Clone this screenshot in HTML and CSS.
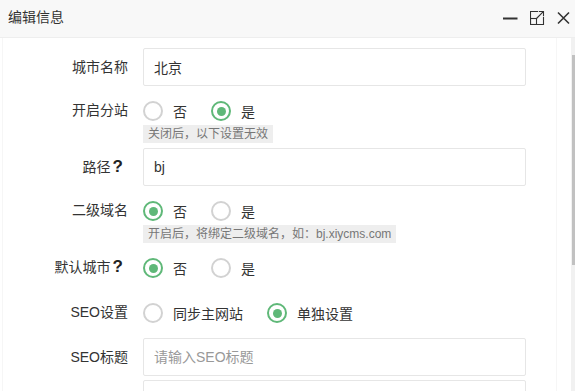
FILE: index.html
```html
<!DOCTYPE html>
<html lang="zh-CN">
<head>
    <meta charset="UTF-8">
    <meta name="viewport" content="width=device-width, initial-scale=1.0">
    <title>编辑信息</title>
    <link rel="stylesheet" href="styles.css">
</head>
<body>
    <div class="dialog">
        <!-- 标题栏 -->
        <div class="title-bar">
            <span class="title">编辑信息</span>
            <div class="title-tools">
                <svg class="tool" width="15" height="14" viewBox="0 0 15 14">
                    <path d="M0 7.5H14.5" stroke="#333" stroke-width="2" fill="none"/>
                </svg>
                <svg class="tool" width="15" height="14" viewBox="0 0 15 14">
                    <path d="M8 0.5H0.5V13.5H13.5V6" stroke="#333" stroke-width="1.1" fill="none"/>
                    <rect x="0.5" y="7.5" width="6" height="6" stroke="#333" stroke-width="1.1" fill="none"/>
                    <path d="M6.5 7.5L13.3 0.7M8.8 0.5H13.5V5.2" stroke="#333" stroke-width="1.1" fill="none"/>
                </svg>
                <svg class="tool" width="13" height="14" viewBox="0 0 13 14">
                    <path d="M1 1.5L12 12.5M12 1.5L1 12.5" stroke="#333" stroke-width="1.6" fill="none"/>
                </svg>
            </div>
        </div>

        <div class="dialog-body">
            <div class="content">
                <form class="form">
                    <div class="form-item">
                        <label class="form-label">城市名称</label>
                        <div class="field">
                            <input class="input" type="text" value="北京">
                        </div>
                    </div>

                    <div class="form-item">
                        <label class="form-label">开启分站</label>
                        <div class="field">
                            <div class="radios">
                                <span class="radio"><i class="dot"></i>否</span>
                                <span class="radio checked"><i class="dot"></i>是</span>
                            </div>
                            <span class="hint">关闭后，以下设置无效</span>
                        </div>
                    </div>

                    <div class="form-item">
                        <label class="form-label">路径<b class="help">?</b></label>
                        <div class="field">
                            <input class="input" type="text" value="bj">
                        </div>
                    </div>

                    <div class="form-item">
                        <label class="form-label">二级域名</label>
                        <div class="field">
                            <div class="radios">
                                <span class="radio checked"><i class="dot"></i>否</span>
                                <span class="radio"><i class="dot"></i>是</span>
                            </div>
                            <span class="hint">开启后，将绑定二级域名，如：bj.xiycms.com</span>
                        </div>
                    </div>

                    <div class="form-item">
                        <label class="form-label">默认城市<b class="help">?</b></label>
                        <div class="field">
                            <div class="radios">
                                <span class="radio checked"><i class="dot"></i>否</span>
                                <span class="radio"><i class="dot"></i>是</span>
                            </div>
                        </div>
                    </div>

                    <div class="form-item">
                        <label class="form-label">SEO设置</label>
                        <div class="field">
                            <div class="radios">
                                <span class="radio"><i class="dot"></i>同步主网站</span>
                                <span class="radio checked"><i class="dot"></i>单独设置</span>
                            </div>
                        </div>
                    </div>

                    <div class="form-item">
                        <label class="form-label">SEO标题</label>
                        <div class="field">
                            <input class="input" type="text" placeholder="请输入SEO标题">
                        </div>
                    </div>

                    <div class="form-item tight">
                        <label class="form-label"></label>
                        <div class="field">
                            <input class="input" type="text">
                        </div>
                    </div>
                </form>
            </div>
            <div class="scrollbar"><div class="thumb"></div></div>
        </div>
    </div>
</body>
</html>
```

FILE: styles.css
```css
/* 页面基础 */
html, body {
    margin: 0;
    padding: 0;
    height: 100%;
    overflow: hidden;
}

body {
    font-family: "Liberation Sans", "Noto Sans CJK SC", sans-serif;
    font-size: 14px;
    color: #333;
    background-color: #fff;
}

.dialog {
    display: flex;
    flex-direction: column;
    height: 391px;
}

/* 标题栏 */
.title-bar {
    height: 37px;
    flex-shrink: 0;
    display: flex;
    align-items: center;
    justify-content: space-between;
    padding: 0 5px 0 8px;
    background-color: #f8f8f8;
    border-bottom: 1px solid #eee;
}

.title {
    font-size: 14px;
    color: #333;
    margin-top: -5px;
}

.title-tools {
    display: flex;
    align-items: center;
    gap: 12px;
    margin-top: -2px;
}

.tool {
    display: block;
}

/* 内容区 */
.dialog-body {
    flex: 1;
    display: flex;
    min-height: 0;
}

.content {
    width: 555px;
    margin-left: 2px;
    border-left: 1px solid #f6f6f6;
    border-right: 1px solid #f6f6f6;
    padding: 10px 30px 0 0;
    box-sizing: border-box;
    overflow: hidden;
}

.scrollbar {
    width: 4px;
    margin-left: 14px;
    background-color: #f1f1f1;
    padding-top: 17px;
    box-sizing: border-box;
}

.thumb {
    height: 210px;
    margin-left: 1px;
    background-color: #c1c1c1;
}

/* 表单 */
.form-item {
    display: grid;
    grid-template-columns: 125px 1fr;
    column-gap: 15px;
    margin-bottom: 5px;
}

.form-item.tight {
    margin-bottom: 0;
    margin-top: -1px;
}

.form-label {
    text-align: right;
    line-height: 38px;
    white-space: nowrap;
}

.help {
    font-size: 17px;
    font-weight: bold;
    color: #222;
    margin: 0 5px 0 2px;
}

.field {
    display: flex;
    flex-direction: column;
    align-items: flex-start;
}

.input {
    width: 100%;
    height: 38px;
    box-sizing: border-box;
    border: 1px solid #e6e6e6;
    border-radius: 2px;
    padding: 0 10px;
    font-family: inherit;
    font-size: 14px;
    color: #333;
    outline: none;
}

.input::placeholder {
    color: #999;
}

/* 单选 */
.radios {
    display: flex;
    align-items: center;
    height: 40px;
    gap: 24px;
}

.radio {
    display: flex;
    align-items: center;
    gap: 10px;
    color: #333;
}

.dot {
    width: 20px;
    height: 20px;
    box-sizing: border-box;
    border: 2px solid #d2d2d2;
    border-radius: 50%;
    display: flex;
    align-items: center;
    justify-content: center;
}

.radio.checked .dot {
    border-color: #5fb878;
}

.radio.checked .dot::after {
    content: "";
    width: 9px;
    height: 9px;
    border-radius: 50%;
    background-color: #5fb878;
}

.hint {
    margin-top: -6px;
    height: 18px;
    line-height: 18px;
    padding: 0 5px;
    font-size: 12px;
    color: #777;
    background-color: #eee;
    white-space: nowrap;
}
```
